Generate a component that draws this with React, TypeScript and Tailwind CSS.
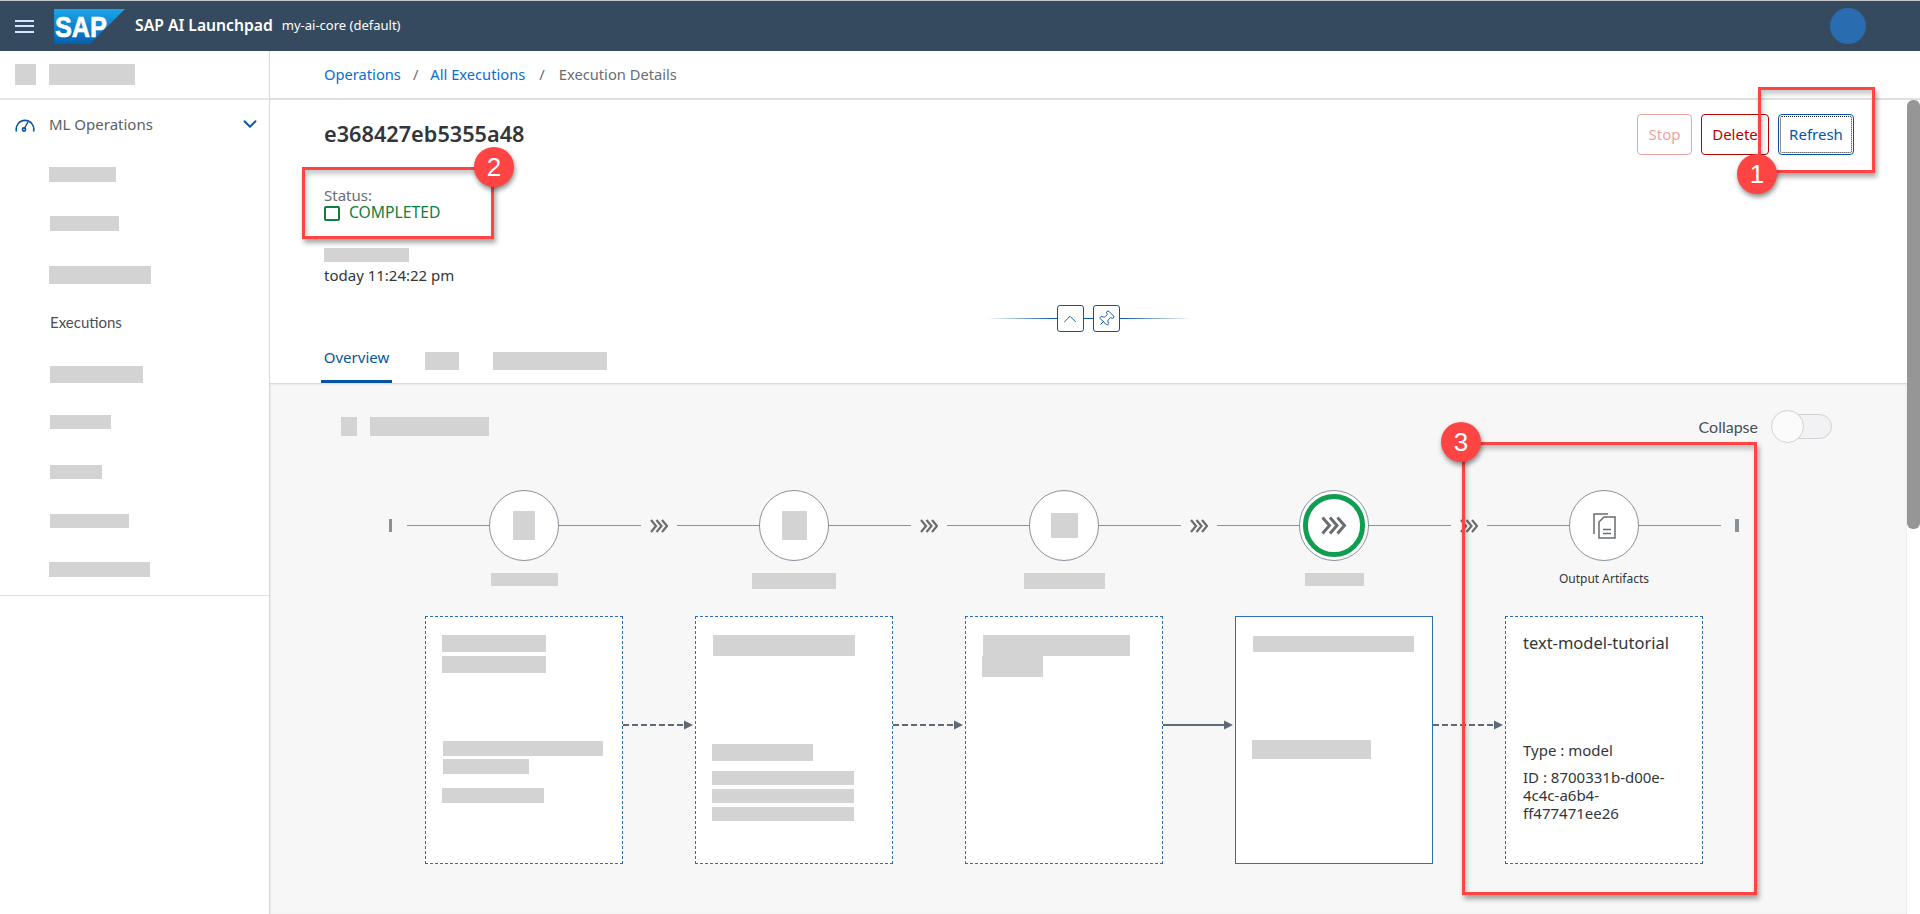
import { ChevronDown, ChevronUp, Pin } from 'lucide-react'

const SANS = 'font-["Noto_Sans",sans-serif]'

function Ph({ className = '' }: { className?: string }) {
  return <div className={`bg-[#d3d3d3] ${className}`} />
}

function SapLogo() {
  return (
    <svg width="71" height="35" viewBox="0 0 71 35" className="shrink-0">
      <defs>
        <linearGradient id="sapBlue" x1="0" y1="0" x2="0" y2="1">
          <stop offset="0" stopColor="#1aa5ea" />
          <stop offset="1" stopColor="#0560ad" />
        </linearGradient>
      </defs>
      <polygon points="0,0 71,0 36,35 0,35" fill="url(#sapBlue)" />
      <text x="1" y="28" fontFamily="Liberation Sans, sans-serif" fontWeight="700" fontSize="29" fill="#fff" stroke="#fff" strokeWidth="0.6" textLength="52" lengthAdjust="spacingAndGlyphs">
        SAP
      </text>
    </svg>
  )
}

function GaugeIcon() {
  return (
    <svg width="20" height="16" viewBox="0 0 20 16" fill="none" stroke="#0854a0" strokeWidth="1.6" className="shrink-0">
      <path d="M1.5 15.5 A8.8 8.8 0 1 1 18.5 15.5" />
      <path d="M9 13 L13 6" strokeWidth="1.5" />
      <circle cx="9" cy="13.5" r="1.6" />
    </svg>
  )
}

function TripleChevron({ className = '' }: { className?: string }) {
  return (
    <svg width="18" height="14" viewBox="0 0 18 14" fill="none" stroke="#6a6d70" strokeWidth="2.2" className={className}>
      <path d="M1 1 L6 7 L1 13" />
      <path d="M6.5 1 L11.5 7 L6.5 13" />
      <path d="M12 1 L17 7 L12 13" />
    </svg>
  )
}

function ArtifactIcon() {
  return (
    <svg width="23" height="26" viewBox="0 0 23 26" fill="none" stroke="#6a6d70" strokeWidth="1.5">
      <path d="M1 21 V1 H15" />
      <path d="M6 9 L11 4 H22 V25 H6 Z" />
      <path d="M10 16.5 H18 M10 20.5 H18" />
    </svg>
  )
}

function Arrow({ dashed }: { dashed?: boolean }) {
  return (
    <svg width="72" height="12" viewBox="0 0 72 12" className="shrink-0 mt-[103px]">
      <line x1="0" y1="6" x2="62" y2="6" stroke="#5f6a76" strokeWidth="2" strokeDasharray={dashed ? '6 3' : undefined} />
      <polygon points="61,1.5 70,6 61,10.5" fill="#5f6a76" />
    </svg>
  )
}

function Line() {
  return <div className="w-[82px] h-px bg-[#89919a]" />
}

function Step({ children, label, last }: { children: React.ReactNode; label: React.ReactNode; last?: boolean }) {
  return (
    <div className="w-[270px] shrink-0 flex flex-col">
      <div className="flex items-center h-[71px]">
        <Line />
        {children}
        <Line />
        {!last && <TripleChevron className="ml-[9px]" />}
      </div>
      <div className="w-[234px] flex justify-center mt-[12px]">{label}</div>
    </div>
  )
}

function Circle({ children }: { children: React.ReactNode }) {
  return (
    <div className="w-[70px] h-[71px] shrink-0 rounded-full border border-[#89919a] bg-white flex items-center justify-center">
      {children}
    </div>
  )
}

function Card({ children, solid, className = '' }: { children: React.ReactNode; solid?: boolean; className?: string }) {
  return (
    <div className={`w-[198px] h-[248px] shrink-0 bg-white border border-[#2a6fb8] ${solid ? 'border-solid' : 'border-dashed'} ${className}`}>
      {children}
    </div>
  )
}

function Annotation({ n, box, badge }: { n: number; box: string; badge: string }) {
  return (
    <>
      <div className={`absolute border-[3px] border-[#ff4444] shadow-[2px_4px_5px_rgba(0,0,0,0.35),inset_2px_4px_5px_rgba(0,0,0,0.22)] ${box}`} />
      <div className={`absolute w-[40px] h-[40px] rounded-full bg-[#ff4444] text-white text-[26px] flex items-center justify-center font-["Liberation_Sans",sans-serif] shadow-[1px_3px_5px_rgba(0,0,0,0.45)] ${badge}`}>
        {n}
      </div>
    </>
  )
}

export default function App() {
  return (
    <div className={`relative w-[1920px] h-[914px] overflow-hidden bg-white text-[#32363a] ${SANS}`}>
      {/* Shell bar */}
      <header className="h-[51px] border-t border-[#c4c8cc] bg-[#354a5f] flex items-center">
        <div className="ml-[15px] w-[19px] flex flex-col gap-[3.5px] shrink-0">
          <div className="h-[2px] bg-[#d1e8ff]" />
          <div className="h-[2px] bg-[#d1e8ff]" />
          <div className="h-[2px] bg-[#d1e8ff]" />
        </div>
        <div className="ml-[20px]"><SapLogo /></div>
        <span className="ml-[10px] text-[15.7px] font-semibold text-white">SAP AI Launchpad</span>
        <span className="ml-[9px] text-[13px] text-white">my-ai-core (default)</span>
        <div className="ml-auto mr-[54px] w-[36px] h-[36px] rounded-full bg-[#2a6cb0]" />
      </header>

      <div className="flex h-[863px]">
        {/* Side navigation */}
        <aside className="w-[270px] shrink-0 border-r border-[#d9d9d9]">
          <div className="h-[49px] border-b-2 border-[#e5e5e5] flex items-center pl-[15px] gap-[13px]">
            <Ph className="w-[21px] h-[21px]" />
            <Ph className="w-[86px] h-[21px]" />
          </div>
          <div className="h-[50px] flex items-center pl-[15px] pb-[2px]">
            <GaugeIcon />
            <span className="ml-[14px] text-[15px] text-[#5b6067]">ML Operations</span>
            <ChevronDown className="ml-auto mr-[8px] text-[#0854a0]" size={22} strokeWidth={2} />
          </div>
          <div className="pl-[49px] flex flex-col items-start">
            <Ph className="w-[67px] h-[15px] mt-[17px]" />
            <Ph className="w-[69px] h-[15px] mt-[34px] ml-px" />
            <Ph className="w-[102px] h-[18px] mt-[35px]" />
            <div className="mt-[28px] mb-px ml-px h-[20px] leading-[20px] text-[15px] text-[#4a4f55] font-['Lato',sans-serif]">Executions</div>
            <Ph className="w-[93px] h-[17px] mt-[33px] ml-px" />
            <Ph className="w-[61px] h-[14px] mt-[32px] ml-px" />
            <Ph className="w-[52px] h-[14px] mt-[36px] ml-px" />
            <Ph className="w-[79px] h-[14px] mt-[35px] ml-px" />
            <Ph className="w-[101px] h-[15px] mt-[34px]" />
          </div>
          <div className="mt-[18px] border-t border-[#e0e0e0]" />
        </aside>

        <main className="flex-1 flex flex-col min-w-0">
          {/* Breadcrumb */}
          <div className="h-[49px] shrink-0 border-b-2 border-[#e0e0e0] flex items-center pl-[54px] text-[14.7px]">
            <span className="text-[#0a6ed1]">Operations</span>
            <span className="mx-[12px] text-[#6a6d70]">/</span>
            <span className="text-[#0a6ed1]">All Executions</span>
            <span className="mx-[14px] text-[#6a6d70]">/</span>
            <span className="text-[#6a6d70]">Execution Details</span>
          </div>

          <div className="flex-1 flex min-h-0">
            <div className="flex-1 min-w-0 flex flex-col">
              {/* Object page header */}
              <div className="h-[283px] shrink-0 flex flex-col">
                <div className="mt-[14px] h-[41px] flex items-center justify-between pl-[54px] pr-[53px]">
                  <h1 className="text-[21.7px] font-semibold text-[#32363a]">e368427eb5355a48</h1>
                  <div className="flex gap-[9px] text-[15px]">
                    <button className="w-[55px] h-[41px] rounded border border-[#eea3a3] text-[#eea3a3]">Stop</button>
                    <button className="w-[68px] h-[41px] rounded border border-[#bb0000] text-[#bb0000]">Delete</button>
                    <button className="w-[76px] h-[41px] rounded border border-[#0854a0] text-[#0854a0] outline outline-1 outline-dotted outline-[#222] -outline-offset-[3px]">Refresh</button>
                  </div>
                </div>
                <div className="pl-[54px] mt-[31px] text-[15px] leading-[18px] text-[#6a6d70]">Status:</div>
                <div className="pl-[54px] flex items-center h-[18px] text-[15.7px] text-[#107e3e]">
                  <div className="w-[16px] h-[15px] rounded-[2px] border-2 border-[#107e3e]" />
                  <span className="ml-[9px]">COMPLETED</span>
                </div>
                <Ph className="ml-[54px] mt-[26px] w-[85px] h-[14px]" />
                <div className="pl-[54px] mt-[4px] text-[15px] leading-[18px] text-[#32363a]">today 11:24:22 pm</div>

                {/* Collapse / pin bar */}
                <div className="mt-[21px] h-[27px] flex items-center justify-center">
                  <div className="w-[70px] h-px bg-gradient-to-r from-transparent to-[#0854a0]" />
                  <button className="w-[27px] h-[27px] rounded-[3px] border border-[#0854a0] flex items-center justify-center text-[#0854a0]">
                    <ChevronUp size={22} strokeWidth={1} />
                  </button>
                  <div className="w-[9px] h-px bg-[#0854a0]" />
                  <button className="w-[27px] h-[27px] rounded-[3px] border border-[#0854a0] flex items-center justify-center text-[#0854a0]">
                    <Pin size={18} strokeWidth={1.25} className="rotate-45" />
                  </button>
                  <div className="w-[71px] h-px bg-gradient-to-l from-transparent to-[#0854a0]" />
                </div>

                {/* Tabs */}
                <div className="mt-[8px] h-[43px] flex items-start pl-[51px]">
                  <div className="w-[71px] h-[43px] border-b-[3px] border-[#0854a0] flex items-center justify-center pb-[6px] text-[15px] text-[#0854a0]">Overview</div>
                  <Ph className="ml-[33px] mt-[12px] w-[34px] h-[18px]" />
                  <Ph className="ml-[34px] mt-[12px] w-[114px] h-[18px]" />
                </div>
              </div>

              {/* Pipeline section */}
              <section className="flex-1 bg-[#f7f7f7] shadow-[inset_0_1px_2px_rgba(0,0,0,0.15)] flow-root">
                <div className="mt-[27px] h-[33px] flex items-center pl-[71px] pr-[75px]">
                  <Ph className="w-[16px] h-[19px]" />
                  <Ph className="ml-[13px] w-[119px] h-[19px]" />
                  <span className="ml-auto text-[16px] text-[#4a4f55] font-['Lato',sans-serif]">Collapse</span>
                  <div className="relative ml-[13px] w-[61px] h-[33px] flex items-center justify-end">
                    <div className="w-[50px] h-[25px] rounded-full border border-[#cfd1d6] bg-[#f2f2f4]" />
                    <div className="absolute left-0 top-0 w-[33px] h-[33px] rounded-full border border-[#cfd1d6] bg-[#fbfbfb]" />
                  </div>
                </div>

                <div className="mt-[47px] pl-[119px] flex h-[126px]">
                  <div className="w-[18px] h-[71px] shrink-0 flex items-center">
                    <div className="w-[3px] h-[13px] bg-[#89919a]" />
                  </div>
                  <Step label={<Ph className="w-[67px] h-[13px]" />}>
                    <Circle><Ph className="w-[22px] h-[29px] rounded-[1px]" /></Circle>
                  </Step>
                  <Step label={<Ph className="w-[84px] h-[16px]" />}>
                    <Circle><Ph className="w-[25px] h-[29px] rounded-[1px]" /></Circle>
                  </Step>
                  <Step label={<Ph className="w-[81px] h-[16px]" />}>
                    <Circle><Ph className="w-[27px] h-[25px] rounded-[1px]" /></Circle>
                  </Step>
                  <Step label={<Ph className="w-[59px] h-[13px]" />}>
                    <div className="w-[70px] h-[71px] shrink-0 rounded-full border border-[#89919a] bg-white flex items-center justify-center">
                      <div className="w-[62px] h-[63px] rounded-full border-[5px] border-[#0f9d4f] flex items-center justify-center">
                        <svg width="26" height="19" viewBox="0 0 26 19" fill="none" stroke="#6a6d70" strokeWidth="3">
                          <path d="M1.5 1.5 L8.5 9.5 L1.5 17.5" />
                          <path d="M9 1.5 L16 9.5 L9 17.5" />
                          <path d="M16.5 1.5 L23.5 9.5 L16.5 17.5" />
                        </svg>
                      </div>
                    </div>
                  </Step>
                  <Step last label={<span className="-mt-px text-[12px] leading-[14px] text-[#32363a]">Output Artifacts</span>}>
                    <Circle><ArtifactIcon /></Circle>
                  </Step>
                  <div className="h-[71px] flex items-center ml-[-22px]">
                    <div className="w-[4px] h-[13px] bg-[#89919a]" />
                  </div>
                </div>

                {/* Detail cards */}
                <div className="pl-[155px] flex items-start">
                  <Card className="pl-[16px] pt-[18px]">
                    <Ph className="w-[104px] h-[17px]" />
                    <Ph className="w-[104px] h-[17px] mt-[4px]" />
                    <Ph className="w-[160px] h-[15px] mt-[68px] ml-px" />
                    <Ph className="w-[86px] h-[15px] mt-[3px] ml-px" />
                    <Ph className="w-[102px] h-[15px] mt-[14px]" />
                  </Card>
                  <Arrow dashed />
                  <Card className="pl-[16px] pt-[18px]">
                    <Ph className="w-[142px] h-[21px] ml-px" />
                    <Ph className="w-[101px] h-[17px] mt-[88px]" />
                    <Ph className="w-[142px] h-[14px] mt-[10px]" />
                    <Ph className="w-[142px] h-[14px] mt-[4px]" />
                    <Ph className="w-[142px] h-[14px] mt-[4px]" />
                  </Card>
                  <Arrow dashed />
                  <Card className="pl-[16px] pt-[18px]">
                    <Ph className="w-[147px] h-[21px] ml-px" />
                    <Ph className="w-[61px] h-[21px]" />
                  </Card>
                  <Arrow />
                  <Card solid className="pl-[16px] pt-[19px]">
                    <Ph className="w-[161px] h-[16px] ml-px" />
                    <Ph className="w-[119px] h-[19px] mt-[88px]" />
                  </Card>
                  <Arrow dashed />
                  <Card className="pl-[17px] pr-[18px] pt-[14px] text-[#32363a]">
                    <div className="text-[16.5px] leading-[24px]">text-model-tutorial</div>
                    <div className="mt-[86px] text-[15px] leading-[18px]">Type : model</div>
                    <div className="mt-[9px] text-[15px] leading-[18px]">ID : 8700331b-d00e-4c4c-a6b4-ff477471ee26</div>
                  </Card>
                </div>
              </section>
            </div>

            {/* Scrollbar */}
            <div className="w-[13px] shrink-0 bg-white">
              <div className="h-[429px] rounded-t-[6px] rounded-b-[6px] bg-[#969696]" />
            </div>
          </div>
        </main>
      </div>

      <Annotation n={1} box="left-[1758px] top-[87px] w-[117px] h-[86px]" badge="left-[1737px] top-[154px]" />
      <Annotation n={2} box="left-[302px] top-[167px] w-[192px] h-[72px]" badge="left-[474px] top-[147px]" />
      <Annotation n={3} box="left-[1462px] top-[442px] w-[295px] h-[453px]" badge="left-[1441px] top-[422px]" />
    </div>
  )
}
